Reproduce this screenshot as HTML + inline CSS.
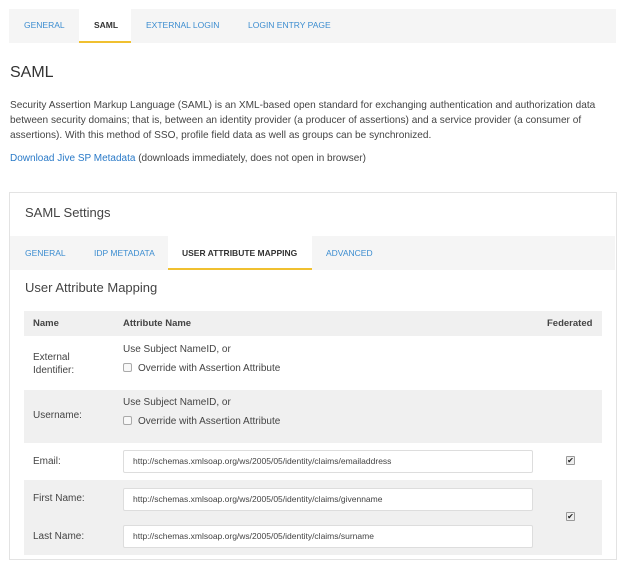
<!DOCTYPE html>
<html><head><style>
*{box-sizing:border-box;margin:0;padding:0}
body{width:624px;height:561px;background:#fff;font-family:"Liberation Sans",Arial,sans-serif;color:#333;position:relative;overflow:hidden}
.a{position:absolute;white-space:nowrap}
.tab{font-size:8.5px;color:#3c8dd0;position:absolute}
.act{color:#333;font-weight:bold}
.blue{color:#2a7ac8}
.p{font-size:10px;color:#444}
.cb{position:absolute;width:9px;height:9px;border:1px solid #aaa;border-radius:2px;background:#f8f8f8}
.cbc{position:absolute;width:9px;height:9px;border:1px solid #999;border-radius:1px;background:#eee;font-size:8px;line-height:7px;text-align:center;color:#222}
.inp{position:absolute;left:123px;width:410px;height:23px;border:1px solid #ddd;border-radius:2px;background:#fff;font-size:8.5px;color:#444;padding-left:9px;line-height:21px}
</style></head><body>
<div class="a" style="left:9px;top:9px;width:607px;height:34px;background:#f5f5f5"></div>
<div class="a" style="left:79px;top:9px;width:52px;height:34px;background:#fff;border-bottom:2px solid #f0c030"></div>
<div class="tab" style="left:24px;top:20px">GENERAL</div>
<div class="tab act" style="left:94px;top:20px">SAML</div>
<div class="tab" style="left:146px;top:20px">EXTERNAL LOGIN</div>
<div class="tab" style="left:248px;top:20px">LOGIN ENTRY PAGE</div>
<div class="a" style="left:10px;top:64px;font-size:16px;color:#333">SAML</div>
<div class="a p" style="left:10px;top:98px;line-height:15px;font-size:10.1px">Security Assertion Markup Language (SAML) is an XML-based open standard for exchanging authentication and authorization data<br>between security domains; that is, between an identity provider (a producer of assertions) and a service provider (a consumer of<br>assertions). With this method of SSO, profile field data as well as groups can be synchronized.</div>
<div class="a p" style="left:10px;top:153px"><span class="blue">Download Jive SP Metadata</span> (downloads immediately, does not open in browser)</div>
<div class="a" style="left:9px;top:192px;width:608px;height:368px;border:1px solid #e3e3e3"></div>
<div class="a" style="left:25px;top:205px;font-size:13px;color:#444">SAML Settings</div>
<div class="a" style="left:10px;top:236px;width:605px;height:34px;background:#f5f5f5"></div>
<div class="a" style="left:168px;top:236px;width:144px;height:34px;background:#fff;border-bottom:2px solid #f0c030"></div>
<div class="tab" style="left:25px;top:248px">GENERAL</div>
<div class="tab" style="left:94px;top:248px">IDP METADATA</div>
<div class="tab act" style="left:182px;top:248px">USER ATTRIBUTE MAPPING</div>
<div class="tab" style="left:326px;top:248px">ADVANCED</div>
<div class="a" style="left:25px;top:280px;font-size:13px;color:#444">User Attribute Mapping</div>
<div class="a" style="left:24px;top:311px;width:578px;height:25px;background:#f0f0f0"></div>
<div class="a" style="left:33px;top:318px;font-size:9.5px;font-weight:bold;color:#444">Name</div>
<div class="a" style="left:123px;top:318px;font-size:9.5px;font-weight:bold;color:#444">Attribute Name</div>
<div class="a" style="left:547px;top:318px;font-size:9.5px;font-weight:bold;color:#444">Federated</div>
<div class="a p" style="left:33px;top:351px;line-height:13px">External<br>Identifier:</div>
<div class="a p" style="left:123px;top:344px">Use Subject NameID, or</div>
<div class="cb" style="left:123px;top:363px"></div>
<div class="a p" style="left:138px;top:363px">Override with Assertion Attribute</div>
<div class="a" style="left:24px;top:390px;width:578px;height:53px;background:#f0f0f0"></div>
<div class="a p" style="left:33px;top:410px">Username:</div>
<div class="a p" style="left:123px;top:397px">Use Subject NameID, or</div>
<div class="cb" style="left:123px;top:416px"></div>
<div class="a p" style="left:138px;top:416px">Override with Assertion Attribute</div>
<div class="a p" style="left:33px;top:456px">Email:</div>
<div class="inp" style="top:450px">http://schemas.xmlsoap.org/ws/2005/05/identity/claims/emailaddress</div>
<div class="cbc" style="left:566px;top:456px">✔</div>
<div class="a" style="left:24px;top:480px;width:578px;height:75px;background:#f0f0f0"></div>
<div class="a p" style="left:33px;top:493px">First Name:</div>
<div class="inp" style="top:488px">http://schemas.xmlsoap.org/ws/2005/05/identity/claims/givenname</div>
<div class="a p" style="left:33px;top:531px">Last Name:</div>
<div class="inp" style="top:525px">http://schemas.xmlsoap.org/ws/2005/05/identity/claims/surname</div>
<div class="cbc" style="left:566px;top:512px">✔</div>
</body></html>
